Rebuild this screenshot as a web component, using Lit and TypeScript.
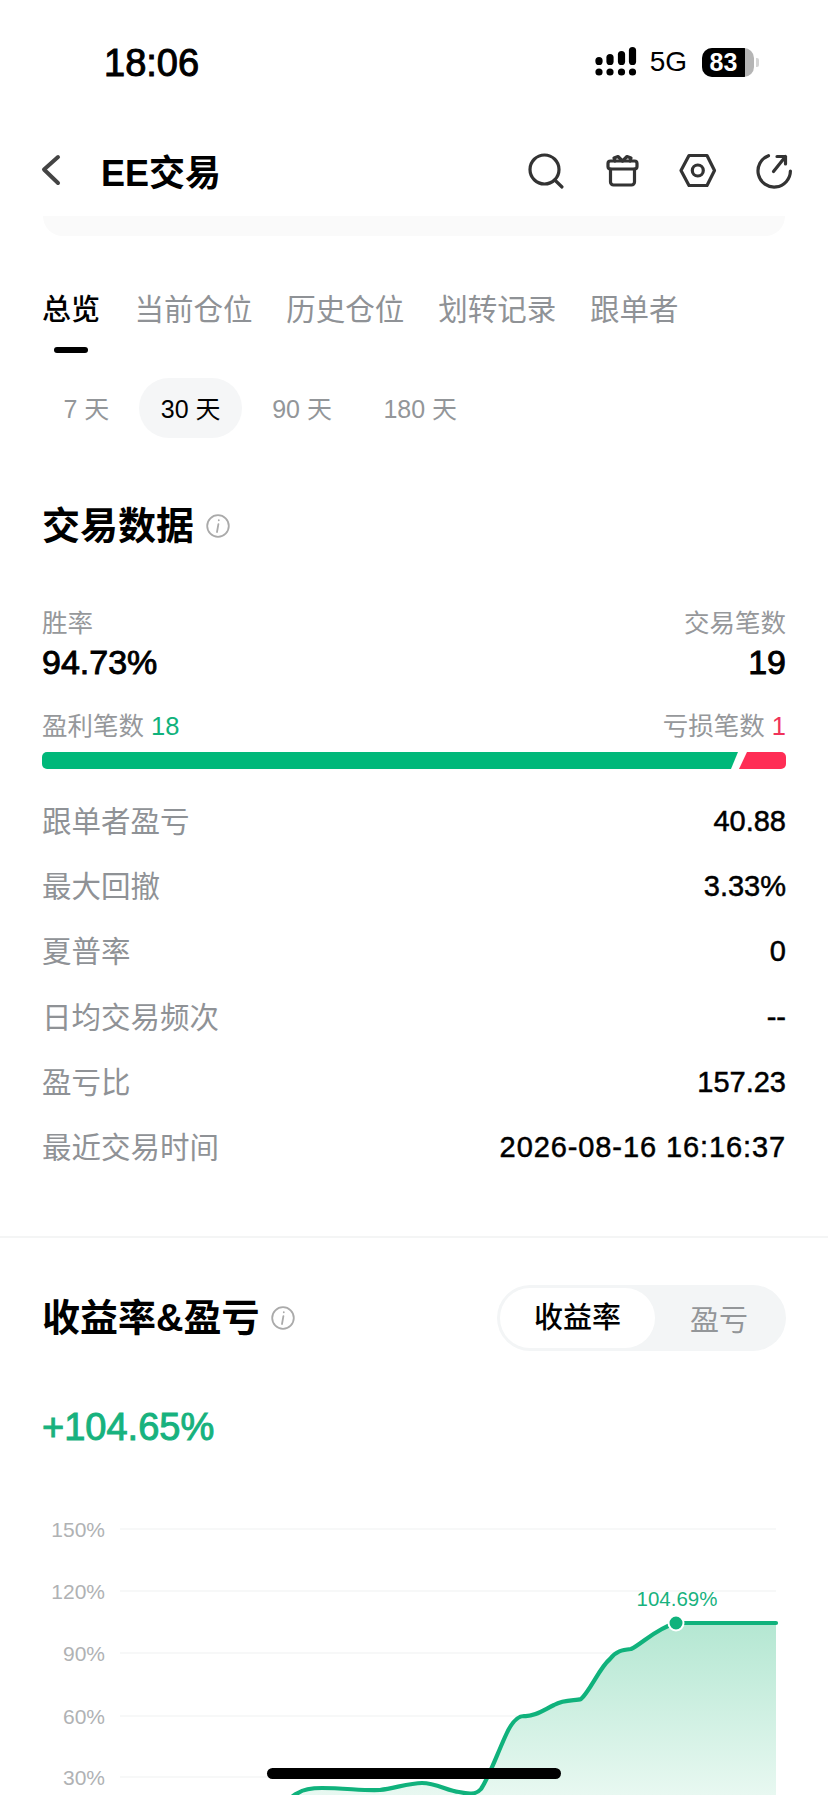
import { LitElement, html, css, svg } from "lit";
import { customElement } from "lit/decorators.js";

const TABS = ["总览", "当前仓位", "历史仓位", "划转记录", "跟单者"];
const PERIODS = ["7 天", "30 天", "90 天", "180 天"];
const ROWS = [
  ["跟单者盈亏", "40.88"],
  ["最大回撤", "3.33%"],
  ["夏普率", "0"],
  ["日均交易频次", "--"],
  ["盈亏比", "157.23"],
  ["最近交易时间", "2026-08-16 16:16:37"],
];
const GRID = [
  ["150%", 1530],
  ["120%", 1592],
  ["90%", 1654],
  ["60%", 1717],
  ["30%", 1778],
] as const;

// curve points, page coordinates
const CURVE =
  "M280 1812 C287 1802 292 1796 298 1794 C304 1790 312 1789 322 1789 C345 1789 365 1792 380 1791 C395 1789 410 1784 422 1784 " +
  "C436 1784 448 1792 459 1793 C468 1795 476 1796 481 1790 C489 1778 496 1758 505 1738 C511 1724 517 1717 524 1717 " +
  "C535 1718 545 1710 554 1706 C565 1700 576 1702 581 1700 C590 1692 600 1668 610 1660 C616 1652 622 1651 631 1650 " +
  "C642 1645 655 1630 676 1624 L776 1624";

const infoIcon = html`<svg class="info" viewBox="0 0 24 24">
  <circle cx="12" cy="12" r="10.8" fill="none" stroke="#aaa" stroke-width="1.8"></circle>
  <path d="M12.8 6.2v.1M12.4 10.2 11 18" fill="none" stroke="#aaa" stroke-width="1.8" stroke-linecap="round"></path>
</svg>`;

@customElement("app-root")
export class AppRoot extends LitElement {
  static styles = css`
    :host {
      display: block;
      position: relative;
      width: 828px;
      height: 1796px;
      overflow: hidden;
      background: #fff;
      color: #000;
      font-family: "Liberation Sans", "Noto Sans CJK SC", sans-serif;
    }
    .status {
      height: 124px;
      display: flex;
      align-items: center;
      justify-content: space-between;
      padding: 0 69px 0 104px;
      box-sizing: border-box;
    }
    .time {
      font-size: 38px;
      padding-top: 2px;
      -webkit-text-stroke: 1px #000;
    }
    .status-right {
      display: flex;
      align-items: center;
    }
    .signal {
      width: 42px;
      height: 30px;
      margin-right: 13px;
    }
    .net {
      font-size: 28px;
      margin-right: 15px;
    }
    .battery {
      width: 52px;
      height: 29px;
      border-radius: 10px;
      overflow: hidden;
      display: flex;
      background: #b5b5b5;
    }
    .battery-fill {
      width: 43px;
      background: #000;
      color: #fff;
      font-size: 25px;
      font-weight: 700;
      line-height: 29px;
      text-align: center;
    }
    .nub {
      width: 3px;
      height: 9px;
      margin-left: 2px;
      border-radius: 0 2px 2px 0;
      background: #d5d5d5;
    }
    .nav {
      height: 92px;
      display: flex;
      align-items: center;
      padding: 0 34.5px 0 40px;
      box-sizing: border-box;
    }
    .back {
      width: 22px;
      height: 32px;
      margin-right: 39px;
    }
    .title {
      flex: 1;
      font-size: 36px;
      font-weight: 700;
    }
    .nav-icons {
      display: flex;
      gap: 36px;
      margin-top: 2px;
    }
    .nav-icons svg {
      width: 40px;
      height: 40px;
      fill: none;
      stroke: #333;
      stroke-width: 3.2;
      stroke-linecap: round;
      stroke-linejoin: round;
    }
    .sliver {
      height: 20px;
      margin: 0 43px;
      background: #fafafa;
      border-radius: 0 0 22px 22px;
    }
    .tabs {
      display: flex;
      gap: 33.8px;
      margin: 52px 42px 0;
    }
    .tab {
      display: flex;
      flex-direction: column;
      align-items: center;
      font-size: 29.5px;
      line-height: 44px;
      color: #8f9296;
    }
    .tab.active {
      color: #000;
      font-size: 29px;
      font-weight: 500;
      margin-right: 0.7px;
    }
    .tab.active::after {
      content: "";
      width: 34px;
      height: 6px;
      margin-top: 15px;
      border-radius: 3px;
      background: #000;
    }
    .periods {
      display: flex;
      gap: 8.5px;
      margin: 25px 42px 0 42px;
    }
    .period {
      height: 60px;
      line-height: 63px;
      padding: 0 21.5px;
      border-radius: 30px;
      font-size: 25px;
      color: #939699;
    }
    .period.active {
      background: #f5f6f7;
      color: #000;
    }
    h2 {
      margin: 0;
      font-size: 38px;
      line-height: 50px;
      font-weight: 700;
    }
    .heading {
      display: flex;
      align-items: center;
      gap: 12px;
      margin: 63px 42px 0;
    }
    .info {
      width: 24px;
      height: 24px;
    }
    .stats {
      display: flex;
      justify-content: space-between;
      margin: 54px 42px 0;
    }
    .stat-right {
      text-align: right;
    }
    .stat-label {
      font-size: 25.5px;
      line-height: 36px;
      color: #96989b;
    }
    .stat-value {
      font-size: 34px;
      line-height: 42px;
      padding-bottom: 2px;
      -webkit-text-stroke: 0.9px #000;
    }
    .legend {
      display: flex;
      justify-content: space-between;
      margin: 23px 42px 0;
      font-size: 25.5px;
      line-height: 36px;
      color: #96989b;
    }
    .up {
      color: #10b27c;
    }
    .down {
      color: #f0325a;
    }
    .bar {
      display: flex;
      gap: 1px;
      height: 17px;
      margin: 8px 42px 0;
    }
    .bar-up {
      width: 696px;
      background: #00b87a;
      border-radius: 5px 0 0 5px;
      clip-path: polygon(0 0, 100% 0, calc(100% - 7px) 100%, 0 100%);
    }
    .bar-down {
      flex: 1;
      background: #ff2d55;
      border-radius: 0 5px 5px 0;
      clip-path: polygon(8px 0, 100% 0, 100% 100%, 0 100%);
    }
    .rows {
      margin: 19px 42px 0;
    }
    .row {
      display: flex;
      align-items: center;
      justify-content: space-between;
      height: 65.2px;
    }
    .row-label {
      font-size: 29.5px;
      color: #8f9296;
      padding-bottom: 3px;
    }
    .row-value {
      font-size: 29px;
      padding-top: 2px;
      -webkit-text-stroke: 0.5px #000;
    }
    .row-value.wide {
      letter-spacing: 0.9px;
    }
    .divider {
      height: 2px;
      margin-top: 57px;
      background: #f4f5f5;
    }
    .chart-head {
      display: flex;
      align-items: center;
      justify-content: space-between;
      margin: 47px 42px 0;
    }
    .chart-title {
      display: flex;
      align-items: center;
      gap: 12px;
    }
    .toggle {
      display: flex;
      align-items: center;
      width: 289px;
      height: 66px;
      padding: 3px;
      box-sizing: border-box;
      border-radius: 33px;
      background: #f3f5f6;
      font-size: 29px;
    }
    .toggle span {
      text-align: center;
      color: #939699;
    }
    .toggle .on {
      width: 155px;
      line-height: 60px;
      border-radius: 30px;
      background: #fff;
      color: #000;
      font-weight: 500;
    }
    .toggle .off {
      flex: 1;
    }
    .total {
      margin: 53px 42px 0;
      font-size: 38px;
      line-height: 46px;
      color: #17b27e;
      -webkit-text-stroke: 1px #17b27e;
    }
    .chart {
      display: block;
      width: 828px;
      height: 345px;
    }
    .axis {
      font-size: 21px;
      fill: #b0b2b4;
      text-anchor: end;
      dominant-baseline: central;
    }
    .peak {
      font-size: 20.5px;
      fill: #17b27e;
      text-anchor: middle;
      dominant-baseline: central;
    }
    .home {
      position: absolute;
      left: 267px;
      top: 1768px;
      width: 294px;
      height: 11px;
      border-radius: 6px;
      background: #000;
    }
  `;

  renderChart() {
    return html`<svg class="chart" viewBox="0 1451 828 345">
      <defs>
        <linearGradient id="area" x1="0" y1="1624" x2="0" y2="1796" gradientUnits="userSpaceOnUse">
          <stop offset="0" stop-color="#b4e7d2"></stop>
          <stop offset="1" stop-color="#e8f8f1"></stop>
        </linearGradient>
      </defs>
      ${GRID.map(
        ([label, y]) => svg`
          <text class="axis" x="105" y=${y}>${label}</text>
          <line x1="120" x2="776" y1=${y} y2=${y} stroke="#f7f8f8" stroke-width="2"></line>`
      )}
      <path d="${CURVE} L776 1812 L280 1812 Z" fill="url(#area)"></path>
      <path d=${CURVE} fill="none" stroke="#10b27c" stroke-width="4.2" stroke-linejoin="round" stroke-linecap="round"></path>
      <circle cx="676" cy="1624" r="7.5" fill="#10b27c" stroke="#fff" stroke-width="2"></circle>
      <text class="peak" x="677" y="1599">104.69%</text>
    </svg>`;
  }

  render() {
    return html`
      <div class="status">
        <div class="time">18:06</div>
        <div class="status-right">
          <svg class="signal" viewBox="0 0 42 30" fill="#000">
            <circle cx="4" cy="25" r="3.6"></circle>
            <circle cx="15" cy="25" r="3.6"></circle>
            <circle cx="26.5" cy="25" r="3.6"></circle>
            <circle cx="37.5" cy="25" r="3.6"></circle>
            <rect x="0.4" y="10" width="7.2" height="8" rx="3.6"></rect>
            <rect x="11.4" y="7" width="7.2" height="11" rx="3.6"></rect>
            <rect x="22.9" y="4" width="7.2" height="14" rx="3.6"></rect>
            <rect x="33.9" y="0" width="7.2" height="18" rx="3.6"></rect>
          </svg>
          <span class="net">5G</span>
          <div class="battery"><div class="battery-fill">83</div></div>
          <div class="nub"></div>
        </div>
      </div>

      <div class="nav">
        <svg class="back" viewBox="0 0 22 32" fill="none" stroke="#444" stroke-width="4" stroke-linecap="round" stroke-linejoin="round">
          <path d="M18 3 4 15.5 18 29"></path>
        </svg>
        <div class="title">EE交易</div>
        <div class="nav-icons">
          <svg viewBox="0 0 40 40">
            <circle cx="18.5" cy="18.5" r="14.5"></circle>
            <path d="M28.8 29 36 36"></path>
          </svg>
          <svg viewBox="0 0 40 40">
            <rect x="6" y="10" width="29" height="8" rx="2.5"></rect>
            <path d="M8.5 18v13a3 3 0 0 0 3 3h18a3 3 0 0 0 3-3V18"></path>
            <path d="M20.5 10 16 5.5 12 7l1 3M20.5 10 25 5.5 29 7l-1 3"></path>
          </svg>
          <svg viewBox="0 0 40 40">
            <path d="M11 4.5h18l7.5 15-7.5 15H11l-8-15z"></path>
            <circle cx="19.8" cy="19.5" r="5.5"></circle>
          </svg>
          <svg viewBox="0 0 40 40">
            <path d="M14.5 4.7A16.2 16.2 0 1 0 36.4 20"></path>
            <path d="M19.5 20.5 31.5 5.5M23 5.5h8.5V13"></path>
          </svg>
        </div>
      </div>
      <div class="sliver"></div>

      <div class="tabs">
        ${TABS.map((t, i) => html`<div class="tab ${i === 0 ? "active" : ""}">${t}</div>`)}
      </div>
      <div class="periods">
        ${PERIODS.map((p, i) => html`<div class="period ${i === 1 ? "active" : ""}">${p}</div>`)}
      </div>

      <div class="heading"><h2>交易数据</h2>${infoIcon}</div>
      <div class="stats">
        <div>
          <div class="stat-label">胜率</div>
          <div class="stat-value">94.73%</div>
        </div>
        <div class="stat-right">
          <div class="stat-label">交易笔数</div>
          <div class="stat-value">19</div>
        </div>
      </div>
      <div class="legend">
        <div>盈利笔数 <span class="up">18</span></div>
        <div>亏损笔数 <span class="down">1</span></div>
      </div>
      <div class="bar"><div class="bar-up"></div><div class="bar-down"></div></div>
      <div class="rows">
        ${ROWS.map(
          ([label, value], i) => html`<div class="row">
            <span class="row-label">${label}</span>
            <span class="row-value ${i === 5 ? "wide" : ""}">${value}</span>
          </div>`
        )}
      </div>

      <div class="divider"></div>
      <div class="chart-head">
        <div class="chart-title"><h2>收益率&盈亏</h2>${infoIcon}</div>
        <div class="toggle"><span class="on">收益率</span><span class="off">盈亏</span></div>
      </div>
      <div class="total">+104.65%</div>
      ${this.renderChart()}
      <div class="home"></div>
    `;
  }
}
